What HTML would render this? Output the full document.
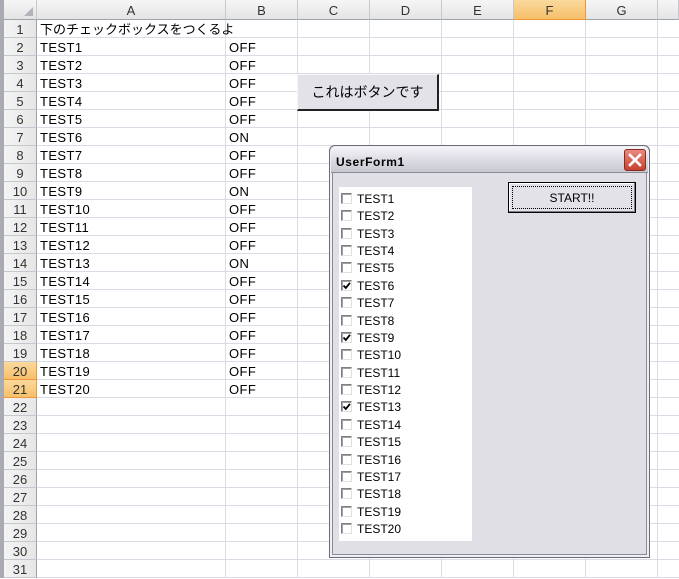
<!DOCTYPE html>
<html><head><meta charset="utf-8"><style>
*{margin:0;padding:0;box-sizing:border-box}
body{width:679px;height:578px;overflow:hidden;background:#fff;position:relative;font-family:"Liberation Sans","Noto Sans CJK JP",sans-serif;}
.a{position:absolute}
.ch{position:absolute;top:0;height:20px;background:linear-gradient(#f6f6f6,#e4e4e4);border-right:1px solid #c5c9cf;border-bottom:1px solid #9ea4ab;text-align:center;font-size:13px;line-height:21px;color:#333}
.rh{position:absolute;left:4px;width:33px;height:18px;background:linear-gradient(90deg,#f4f4f4,#e6e6e6);border-bottom:1px solid #c5c9cf;border-right:1px solid #9ea4ab;text-align:center;font-size:13px;line-height:19px;color:#333}
.sel{background:linear-gradient(#fbd99c,#f5c06a)!important;border-color:#f29536!important}
.hl{position:absolute;left:37px;width:642px;height:1px;background:#d8dde5}
.vl{position:absolute;top:20px;width:1px;height:558px;background:#d8dde5}
.t{position:absolute;font-size:13px;line-height:18px;color:#000;letter-spacing:0.4px}
.cb{position:absolute;left:341px;width:11px;height:11px;background:#fff;border-top:1px solid #808080;border-left:1px solid #808080;border-right:1px solid #e0e0e0;border-bottom:1px solid #e0e0e0;box-shadow:inset 1px 1px 0 #a0a0a0}
.cl{position:absolute;left:357px;font-size:12px;line-height:14px;color:#000}
</style></head><body>
<div class="a" style="left:0;top:0;width:4px;height:578px;background:#a8acb2"></div>
<div class="ch" style="left:4px;width:33px"><span style="position:absolute;right:3px;bottom:3px;width:0;height:0;border-left:9px solid transparent;border-bottom:9px solid #b0b4ba"></span></div>
<div class="ch" style="left:37px;width:189px">A</div>
<div class="ch" style="left:226px;width:72px">B</div>
<div class="ch" style="left:298px;width:72px">C</div>
<div class="ch" style="left:370px;width:72px">D</div>
<div class="ch" style="left:442px;width:72px">E</div>
<div class="ch sel" style="left:514px;width:72px">F</div>
<div class="ch" style="left:586px;width:72px">G</div>
<div class="ch" style="left:658px;width:21px"></div>
<div id="g"></div>
<script>
var h='';
for(var i=1;i<=31;i++){var y=20+(i-1)*18;h+='<div class="rh'+(i==20||i==21?' sel':'')+'" style="top:'+y+'px">'+i+'</div><div class="hl" style="top:'+(y+17)+'px"></div>';}
[225,297,369,441,513,585,657].forEach(function(x){h+='<div class="vl" style="left:'+x+'px"></div>';});
h+='<div class="t" style="left:40px;top:21px;letter-spacing:0">下のチェックボックスをつくるよ</div>';
var on=[6,9,13];
for(var k=1;k<=20;k++){var y=39+(k-1)*18;h+='<div class="t" style="left:40px;top:'+y+'px">TEST'+k+'</div><div class="t" style="left:229px;top:'+y+'px">'+(on.indexOf(k)>=0?'ON':'OFF')+'</div>';}
document.getElementById('g').innerHTML=h;
</script>
<div class="a" style="left:297px;top:74px;width:142px;height:37px;background:#e2e2e8;border-right:2px solid #222;border-bottom:2px solid #222;border-top:1px solid #f8f8f8;border-left:1px solid #f8f8f8;font-size:14px;line-height:35px;text-align:center">これはボタンです</div>
<div class="a" style="left:329px;top:145px;width:321px;height:413px;background:#dfdfe5;border:1px solid #6a6a78;border-radius:6px 6px 0 0;box-shadow:inset 0 0 0 2px #f0f0f4,inset 0 0 0 3px #8a8a96"></div>
<div class="a" style="left:331px;top:147px;width:317px;height:26px;background:linear-gradient(#f4f4f8,#dcdce4 50%,#c8c8d2);border-radius:5px 5px 0 0;border-bottom:1px solid #8c8c98"></div>
<div class="a" style="left:336px;top:154px;font-size:12px;font-weight:bold;letter-spacing:0.6px;line-height:16px">UserForm1</div>
<div class="a" style="left:624px;top:149px;width:22px;height:22px;border-radius:3px;background:linear-gradient(#e88a80,#c84030);border:1px solid #8a2a20">
<svg width="20" height="20" style="position:absolute;left:0;top:0"><path d="M5 5L15 15M15 5L5 15" stroke="#fff" stroke-width="2.6" stroke-linecap="square"/></svg></div>
<div class="a" style="left:339px;top:187px;width:133px;height:354px;background:#fff"></div>
<div class="a" style="left:508px;top:182px;width:128px;height:31px;background:#e2e2e8;border:1px solid #000;box-shadow:inset -1px -1px 0 #808080,inset 1px 1px 0 #fff;font-size:12px;line-height:30px;text-align:center"><div style="position:absolute;left:3px;top:3px;right:3px;bottom:3px;border:1px dotted #000"></div>START!!</div>
<div id="c"></div>
<script>
var s='';
for(var k=1;k<=20;k++){var y=193+(k-1)*17.37;s+='<div class="cb" style="top:'+Math.round(y)+'px">'+(on.indexOf(k)>=0?'<svg width="10" height="10" style="position:absolute;left:0;top:0"><path d="M1.5 4.5L3.8 7L8 1.8" stroke="#000" stroke-width="1.8" fill="none"/></svg>':'')+'</div><div class="cl" style="top:'+Math.round(y-1)+'px">TEST'+k+'</div>';}
document.getElementById('c').innerHTML=s;
</script>
</body></html>
